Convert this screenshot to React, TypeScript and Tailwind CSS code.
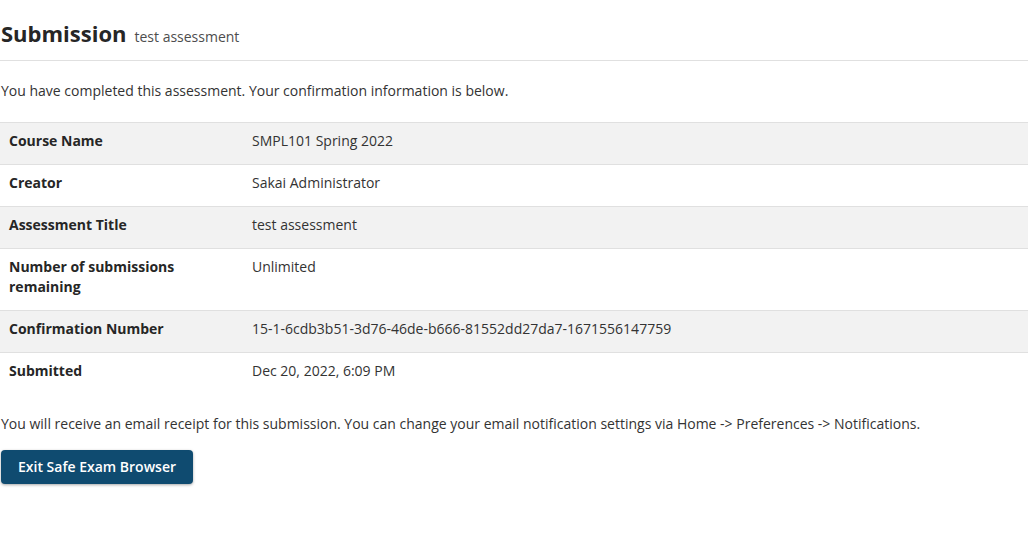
import React from "react";

const rows: { label: string; value: string; shaded: boolean }[] = [
  { label: "Course Name", value: "SMPL101 Spring 2022", shaded: true },
  { label: "Creator", value: "Sakai Administrator", shaded: false },
  { label: "Assessment Title", value: "test assessment", shaded: true },
  { label: "Number of submissions remaining", value: "Unlimited", shaded: false },
  {
    label: "Confirmation Number",
    value: "15-1-6cdb3b51-3d76-46de-b666-81552dd27da7-1671556147759",
    shaded: true,
  },
  { label: "Submitted", value: "Dec 20, 2022, 6:09 PM", shaded: false },
];

export default function App() {
  return (
    <div
      className="w-[1028px] h-[541px] bg-white text-[#333333] text-[14px] leading-[20px]"
      style={{ fontFamily: '"Open Sans", "Noto Sans", sans-serif' }}
    >
      <div className="pt-[18px] pb-[12px] border-b border-[#e0e0e0] flex items-baseline">
        <h1 className="text-[22px] leading-[30px] font-bold text-[#262626] pl-[1px]">Submission</h1>
        <span className="ml-[8px] text-[14px] text-[#4d4d4d]">test assessment</span>
      </div>
      <p className="mt-[20px] pl-[1px]">
        You have completed this assessment. Your confirmation information is below.
      </p>
      <div className="mt-[21px]">
        {rows.map((r) => (
          <div
            key={r.label}
            className={`flex border-t border-[#e0e0e0] ${r.shaded ? "bg-[#f2f2f2]" : "bg-white"}`}
          >
            <div className="w-[244px] pl-[9px] pr-[8px] pt-[8px] pb-[13px] font-bold text-[#262626]">
              {r.label === "Number of submissions remaining" ? (
                <>
                  Number of submissions
                  <br />
                  remaining
                </>
              ) : (
                r.label
              )}
            </div>
            <div className="flex-1 pl-[8px] pt-[8px] pb-[13px]">{r.value}</div>
          </div>
        ))}
      </div>
      <p className="mt-[20px] pl-[1px]">
        You will receive an email receipt for this submission. You can change your email notification
        settings via Home -&gt; Preferences -&gt; Notifications.
      </p>
      <div className="mt-[16px] pl-[1px]">
        <button className="h-[34px] px-[17px] rounded-[4px] bg-[#0f4b70] text-white font-semibold text-[14px] shadow-[0_1px_3px_rgba(0,0,0,0.35)]">
          Exit Safe Exam Browser
        </button>
      </div>
    </div>
  );
}
